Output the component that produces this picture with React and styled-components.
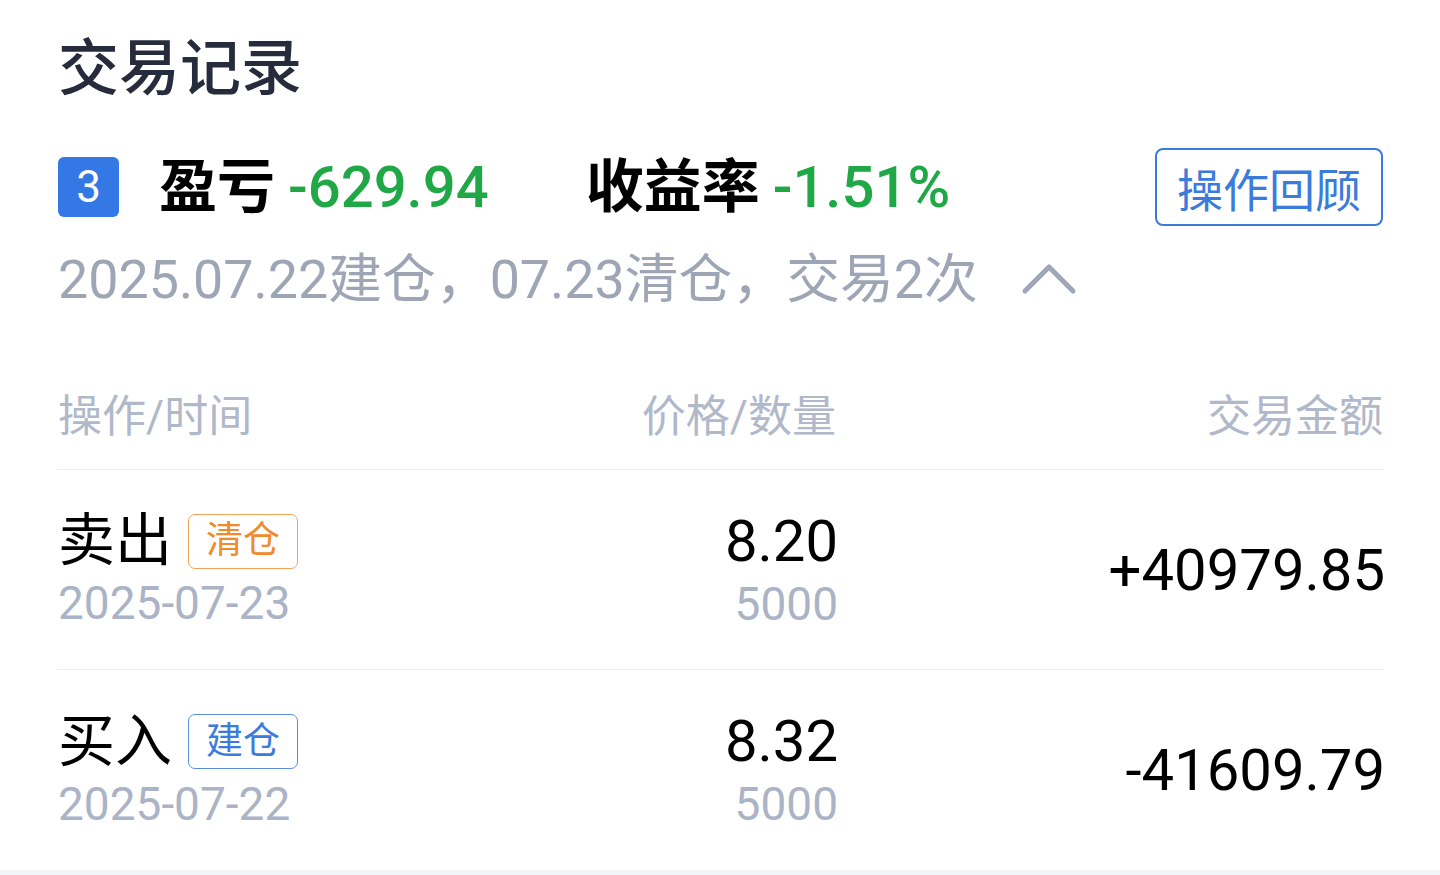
import React from "react";
import styled, { createGlobalStyle } from "styled-components";

const GlobalStyle = createGlobalStyle`
  html, body {
    margin: 0;
    padding: 0;
    background: #ffffff;
  }
  body {
    font-family: Roboto, "Noto Sans CJK SC", sans-serif;
  }
`;

const CJK = `Roboto, "Noto Sans CJK SC", sans-serif`;

const Screen = styled.div`
  width: 1440px;
  height: 875px;
  display: flex;
  flex-direction: column;
  overflow: hidden;
  background: #ffffff;
`;

const Card = styled.section`
  padding: 39px 57px 0 58px;
  display: flex;
  flex-direction: column;
`;

const Title = styled.h1`
  margin: 0;
  font-family: ${CJK};
  font-size: 61px;
  line-height: 60px;
  font-weight: 500;
  color: #262c3c;
`;

// summary: count badge, profit, yield, review button
const Summary = styled.div`
  margin-top: 49px;
  height: 78px;
  display: flex;
  align-items: center;
`;

const CountBadge = styled.span`
  width: 61px;
  height: 60px;
  border-radius: 6px;
  background: #3478e6;
  color: #ffffff;
  font-size: 44px;
  display: flex;
  align-items: center;
  justify-content: center;
  margin-right: 40px;
`;

const Stat = styled.div`
  display: flex;
  align-items: baseline;
  gap: 13px;
  font-size: 58px;
  line-height: 60px;
  margin-right: ${props => props.gap || 0}px;
`;

const StatLabel = styled.span`
  font-weight: 700;
  color: #000000;
`;

const StatValue = styled.span`
  font-weight: 500;
  color: #1fa845;
`;

const ReviewButton = styled.button`
  margin-left: auto;
  width: 228px;
  height: 78px;
  border: 2px solid #3a7bdb;
  border-radius: 8px;
  background: #ffffff;
  color: #3a7bdb;
  font-family: ${CJK};
  font-size: 46px;
  padding: 0;
  display: flex;
  align-items: center;
  justify-content: center;
`;

const Info = styled.div`
  margin-top: 24px;
  display: flex;
  align-items: center;
  gap: 43px;
  font-size: 53.8px;
  line-height: 60px;
  color: #9ea5b5;
`;

const TableHead = styled.div`
  display: grid;
  grid-template-columns: 478px 300px 1fr;
  padding: 84px 0 29px;
  border-bottom: 1px solid #ebebeb;
  font-size: 44px;
  line-height: 46px;
  color: #b0b8c9;
`;

const HeadCell = styled.div`
  justify-self: ${props => (props.right ? "end" : "start")};
`;

const Row = styled.div`
  display: grid;
  grid-template-columns: 478px 300px 1fr;
  align-items: center;
  height: ${props => (props.last ? 200 : 199)}px;
  border-bottom: ${props => (props.last ? "none" : "1px solid #ebebeb")};
`;

const Cell = styled.div`
  display: flex;
  flex-direction: column;
  align-items: ${props => (props.right ? "flex-end" : "flex-start")};
  justify-self: ${props => (props.right ? "end" : "start")};
  margin-right: ${props => (props.right ? -2 : 0)}px;
  gap: ${props => props.gap || 0}px;
`;

const ActionLine = styled.div`
  display: flex;
  align-items: center;
  gap: 16px;
  font-size: 57px;
  line-height: 56px;
  color: #000000;
`;

const Tag = styled.span`
  width: 110px;
  height: 55px;
  box-sizing: border-box;
  border: 1.5px solid ${props => props.border};
  border-radius: 7px;
  color: ${props => props.color};
  font-size: 37px;
  display: flex;
  align-items: center;
  justify-content: center;
`;

const SubText = styled.div`
  font-size: ${props => props.size || 46}px;
  line-height: ${props => props.size || 46}px;
  color: #abb3c6;
`;

const Value = styled.div`
  font-size: 58px;
  line-height: 56px;
  color: #000000;
`;

const Footer = styled.div`
  flex: 1;
  background: #f4f5f9;
`;

const ChevronUp = () => (
  <svg width="56" height="36" viewBox="0 0 56 36">
    <polyline
      points="4,29 28,5 52,29"
      fill="none"
      stroke="#9ea6b7"
      strokeWidth="5"
      strokeLinecap="round"
      strokeLinejoin="round"
    />
  </svg>
);

const trades = [
  {
    action: "卖出",
    tag: "清仓",
    tagColor: "#f08a2c",
    tagBorder: "#f2a25a",
    date: "2025-07-23",
    price: "8.20",
    qty: "5000",
    amount: "+40979.85",
  },
  {
    action: "买入",
    tag: "建仓",
    tagColor: "#3a7bdb",
    tagBorder: "#5a8fe0",
    date: "2025-07-22",
    price: "8.32",
    qty: "5000",
    amount: "-41609.79",
  },
];

const App = () => (
  <>
    <GlobalStyle />
    <Screen>
      <Card>
        <Title>交易记录</Title>

        <Summary>
          <CountBadge>3</CountBadge>
          <Stat gap={97}>
            <StatLabel>盈亏</StatLabel>
            <StatValue>-629.94</StatValue>
          </Stat>
          <Stat>
            <StatLabel>收益率</StatLabel>
            <StatValue>-1.51%</StatValue>
          </Stat>
          <ReviewButton>操作回顾</ReviewButton>
        </Summary>

        <Info>
          <span>2025.07.22建仓，07.23清仓，交易2次</span>
          <ChevronUp />
        </Info>

        <TableHead>
          <HeadCell>操作/时间</HeadCell>
          <HeadCell right>价格/数量</HeadCell>
          <HeadCell right>交易金额</HeadCell>
        </TableHead>

        {trades.map((t, i) => (
          <Row key={t.date} last={i === trades.length - 1}>
            <Cell gap={11}>
              <ActionLine>
                {t.action}
                <Tag color={t.tagColor} border={t.tagBorder}>
                  {t.tag}
                </Tag>
              </ActionLine>
              <SubText>{t.date}</SubText>
            </Cell>
            <Cell right gap={12}>
              <Value>{t.price}</Value>
              <SubText size={46}>{t.qty}</SubText>
            </Cell>
            <Cell right>
              <Value>{t.amount}</Value>
            </Cell>
          </Row>
        ))}
      </Card>
      <Footer />
    </Screen>
  </>
);

export default App;
